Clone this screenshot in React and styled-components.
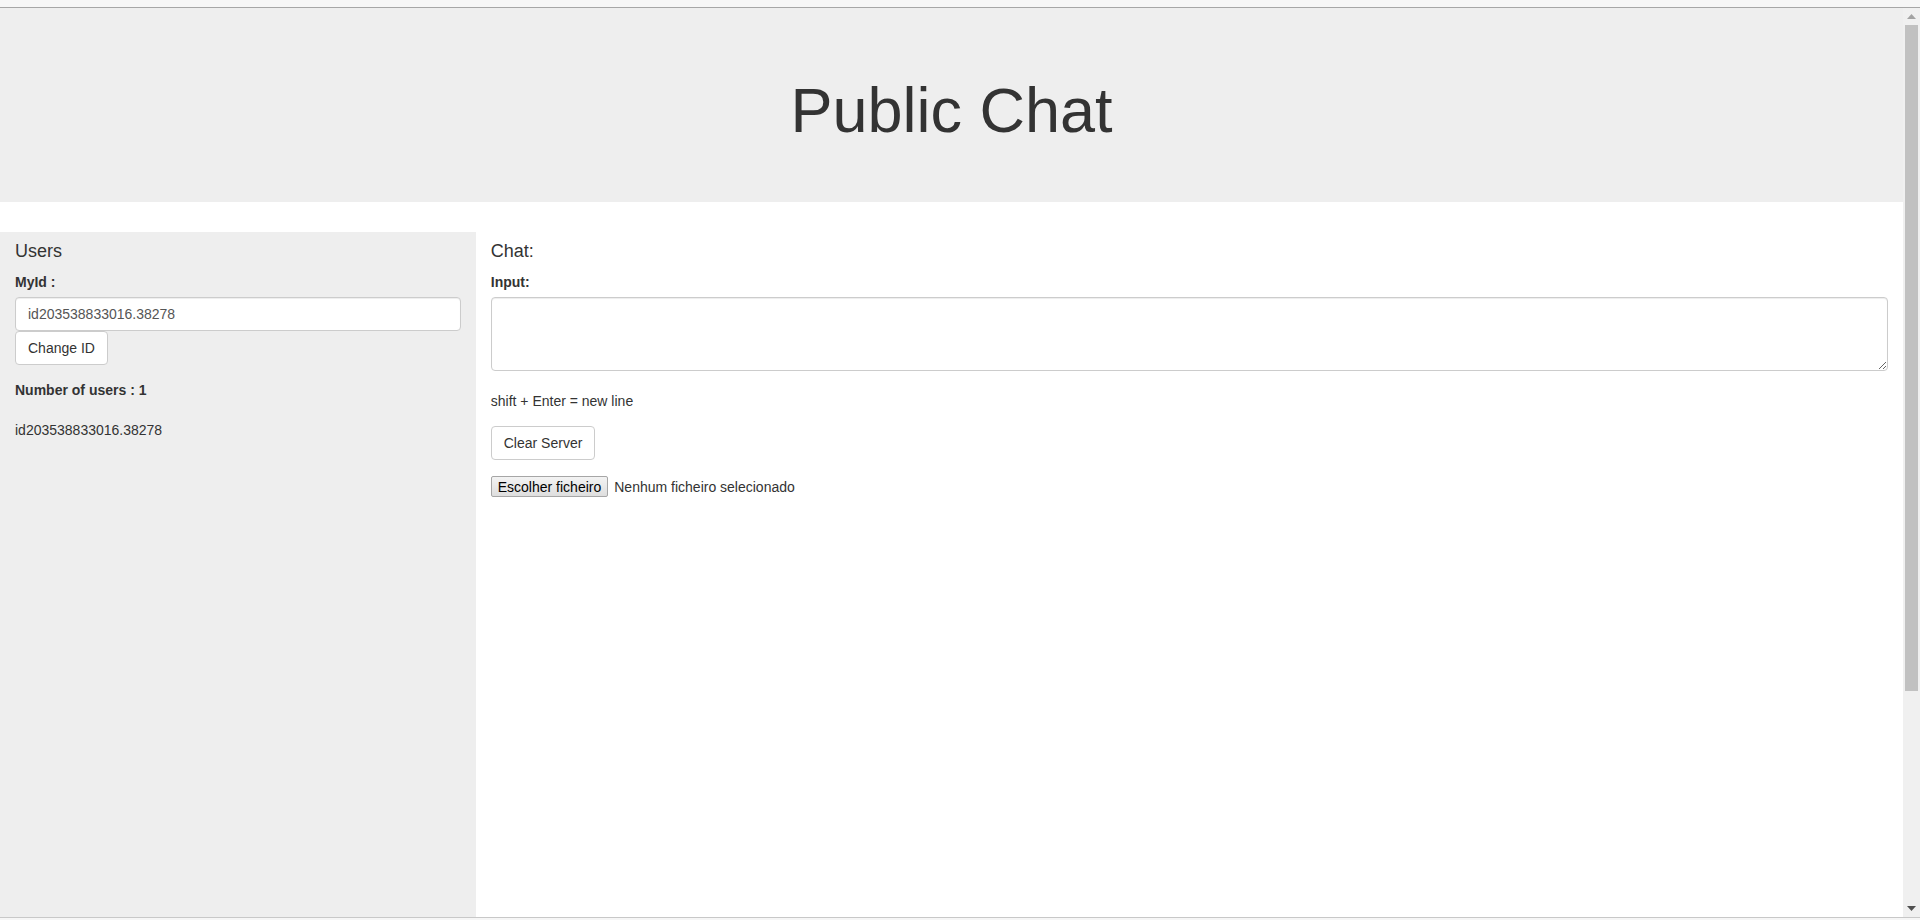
import React from "react";
import styled, { createGlobalStyle } from "styled-components";

const GlobalStyle = createGlobalStyle`
  html, body {
    margin: 0;
    padding: 0;
    height: 100%;
    overflow: hidden;
  }
  body {
    font-family: "Liberation Sans", Arial, Helvetica, sans-serif;
    font-size: 14px;
    line-height: 1.42857143;
    color: #333;
    background: #fff;
  }
  * {
    box-sizing: border-box;
  }
`;

const Frame = styled.div`
  display: flex;
  flex-direction: column;
  height: 920px;
  width: 1920px;
`;

const TopStrip = styled.div`
  height: 8px;
  flex: none;
  background: #f6f6f6;
  border-bottom: 1px solid #a6a6a6;
`;

const BottomStrip = styled.div`
  height: 3px;
  flex: none;
  background: #f6f6f6;
  border-top: 1px solid #c8c8c8;
`;

const Viewport = styled.div`
  display: flex;
  flex: 1;
  min-height: 0;
`;

const Page = styled.div`
  flex: 1;
  display: flex;
  flex-direction: column;
  min-width: 0;
  overflow: hidden;
`;

const Jumbotron = styled.header`
  background: #eee;
  padding: 48px 0 47px;
  margin-bottom: 30px;
  text-align: center;
`;

const Title = styled.h1`
  margin: 20px 0 10px;
  font-size: 63px;
  font-weight: 500;
  line-height: 1.1;
  color: #333;
`;

const Row = styled.div`
  display: flex;
  flex: 1;
`;

const Sidebar = styled.aside`
  width: 25%;
  flex: none;
  background: #eee;
  padding: 0 15px;
`;

const Main = styled.main`
  flex: 1;
  padding: 0 15px;
`;

const Heading = styled.h4`
  margin: 10px 0;
  font-size: 18px;
  font-weight: 500;
  line-height: 1.1;
`;

const Label = styled.label`
  display: block;
  font-weight: 700;
  margin-bottom: 5px;
`;

const TextInput = styled.input`
  display: block;
  width: 100%;
  height: 34px;
  padding: 6px 12px;
  font-family: inherit;
  font-size: 14px;
  line-height: 1.42857143;
  color: #555;
  background: #fff;
  border: 1px solid #ccc;
  border-radius: 4px;
  box-shadow: inset 0 1px 1px rgba(0, 0, 0, 0.075);
  outline: none;
`;

const TextArea = styled.textarea`
  display: block;
  width: 100%;
  height: 74px;
  padding: 6px 12px;
  font-family: inherit;
  font-size: 14px;
  line-height: 1.42857143;
  color: #555;
  background: #fff;
  border: 1px solid #ccc;
  border-radius: 4px;
  box-shadow: inset 0 1px 1px rgba(0, 0, 0, 0.075);
  outline: none;
  resize: vertical;
`;

const Button = styled.button`
  display: block;
  margin-top: ${(p) => p.$top || 0}px;
  padding: 6px 12px;
  font-family: inherit;
  font-size: 14px;
  line-height: 1.42857143;
  color: #333;
  background: #fff;
  border: 1px solid #ccc;
  border-radius: 4px;
  cursor: pointer;
`;

const Text = styled.p`
  margin: ${(p) => p.$top || 0}px 0 0;
  font-weight: ${(p) => (p.$bold ? 700 : 400)};
`;

const FileRow = styled.div`
  display: flex;
  align-items: center;
  gap: 6px;
  margin-top: 16px;
  font-family: "Liberation Sans", Arial, sans-serif;
  font-size: 14px;
  color: #333;
`;

const FileButton = styled.button`
  height: 21px;
  padding: 0 6px;
  font-family: inherit;
  font-size: 14px;
  color: #000;
  background: linear-gradient(#f3f3f3, #dedede);
  border: 1px solid #a6a6a6;
  border-radius: 2px;
`;

const ScrollTrack = styled.div`
  width: 17px;
  flex: none;
  display: flex;
  flex-direction: column;
  align-items: center;
  background: #f0f0f0;
`;

const ScrollArrow = styled.div`
  height: 17px;
  width: 17px;
  display: flex;
  align-items: center;
  justify-content: center;
  flex: none;
`;

const ScrollThumb = styled.div`
  width: 13px;
  height: 666px;
  background: #c1c1c1;
  flex: none;
`;

const ScrollRest = styled.div`
  flex: 1;
`;

const Arrow = ({ down }) => (
  <svg width="9" height="5" viewBox="0 0 9 5">
    <path
      d={down ? "M0 0 L9 0 L4.5 5 Z" : "M0 5 L9 5 L4.5 0 Z"}
      fill={down ? "#505050" : "#a3a3a3"}
    />
  </svg>
);

export default function App() {
  const myId = "id203538833016.38278";
  const users = [myId];

  return (
    <>
      <GlobalStyle />
      <Frame>
        <TopStrip />
        <Viewport>
          <Page>
            <Jumbotron>
              <Title>Public Chat</Title>
            </Jumbotron>
            <Row>
              <Sidebar>
                <Heading>Users</Heading>
                <Label>MyId :</Label>
                <TextInput defaultValue={myId} />
                <Button>Change ID</Button>
                <Text $bold $top={15}>
                  Number of users : {users.length}
                </Text>
                {users.map((u) => (
                  <Text key={u} $top={20}>
                    {u}
                  </Text>
                ))}
              </Sidebar>
              <Main>
                <Heading>Chat:</Heading>
                <Label>Input:</Label>
                <TextArea rows={3} />
                <Text $top={20}>shift + Enter = new line</Text>
                <Button $top={15}>Clear Server</Button>
                <FileRow>
                  <FileButton>Escolher ficheiro</FileButton>
                  <span>Nenhum ficheiro selecionado</span>
                </FileRow>
              </Main>
            </Row>
          </Page>
          <ScrollTrack>
            <ScrollArrow>
              <Arrow />
            </ScrollArrow>
            <ScrollThumb />
            <ScrollRest />
            <ScrollArrow>
              <Arrow down />
            </ScrollArrow>
          </ScrollTrack>
        </Viewport>
        <BottomStrip />
      </Frame>
    </>
  );
}
